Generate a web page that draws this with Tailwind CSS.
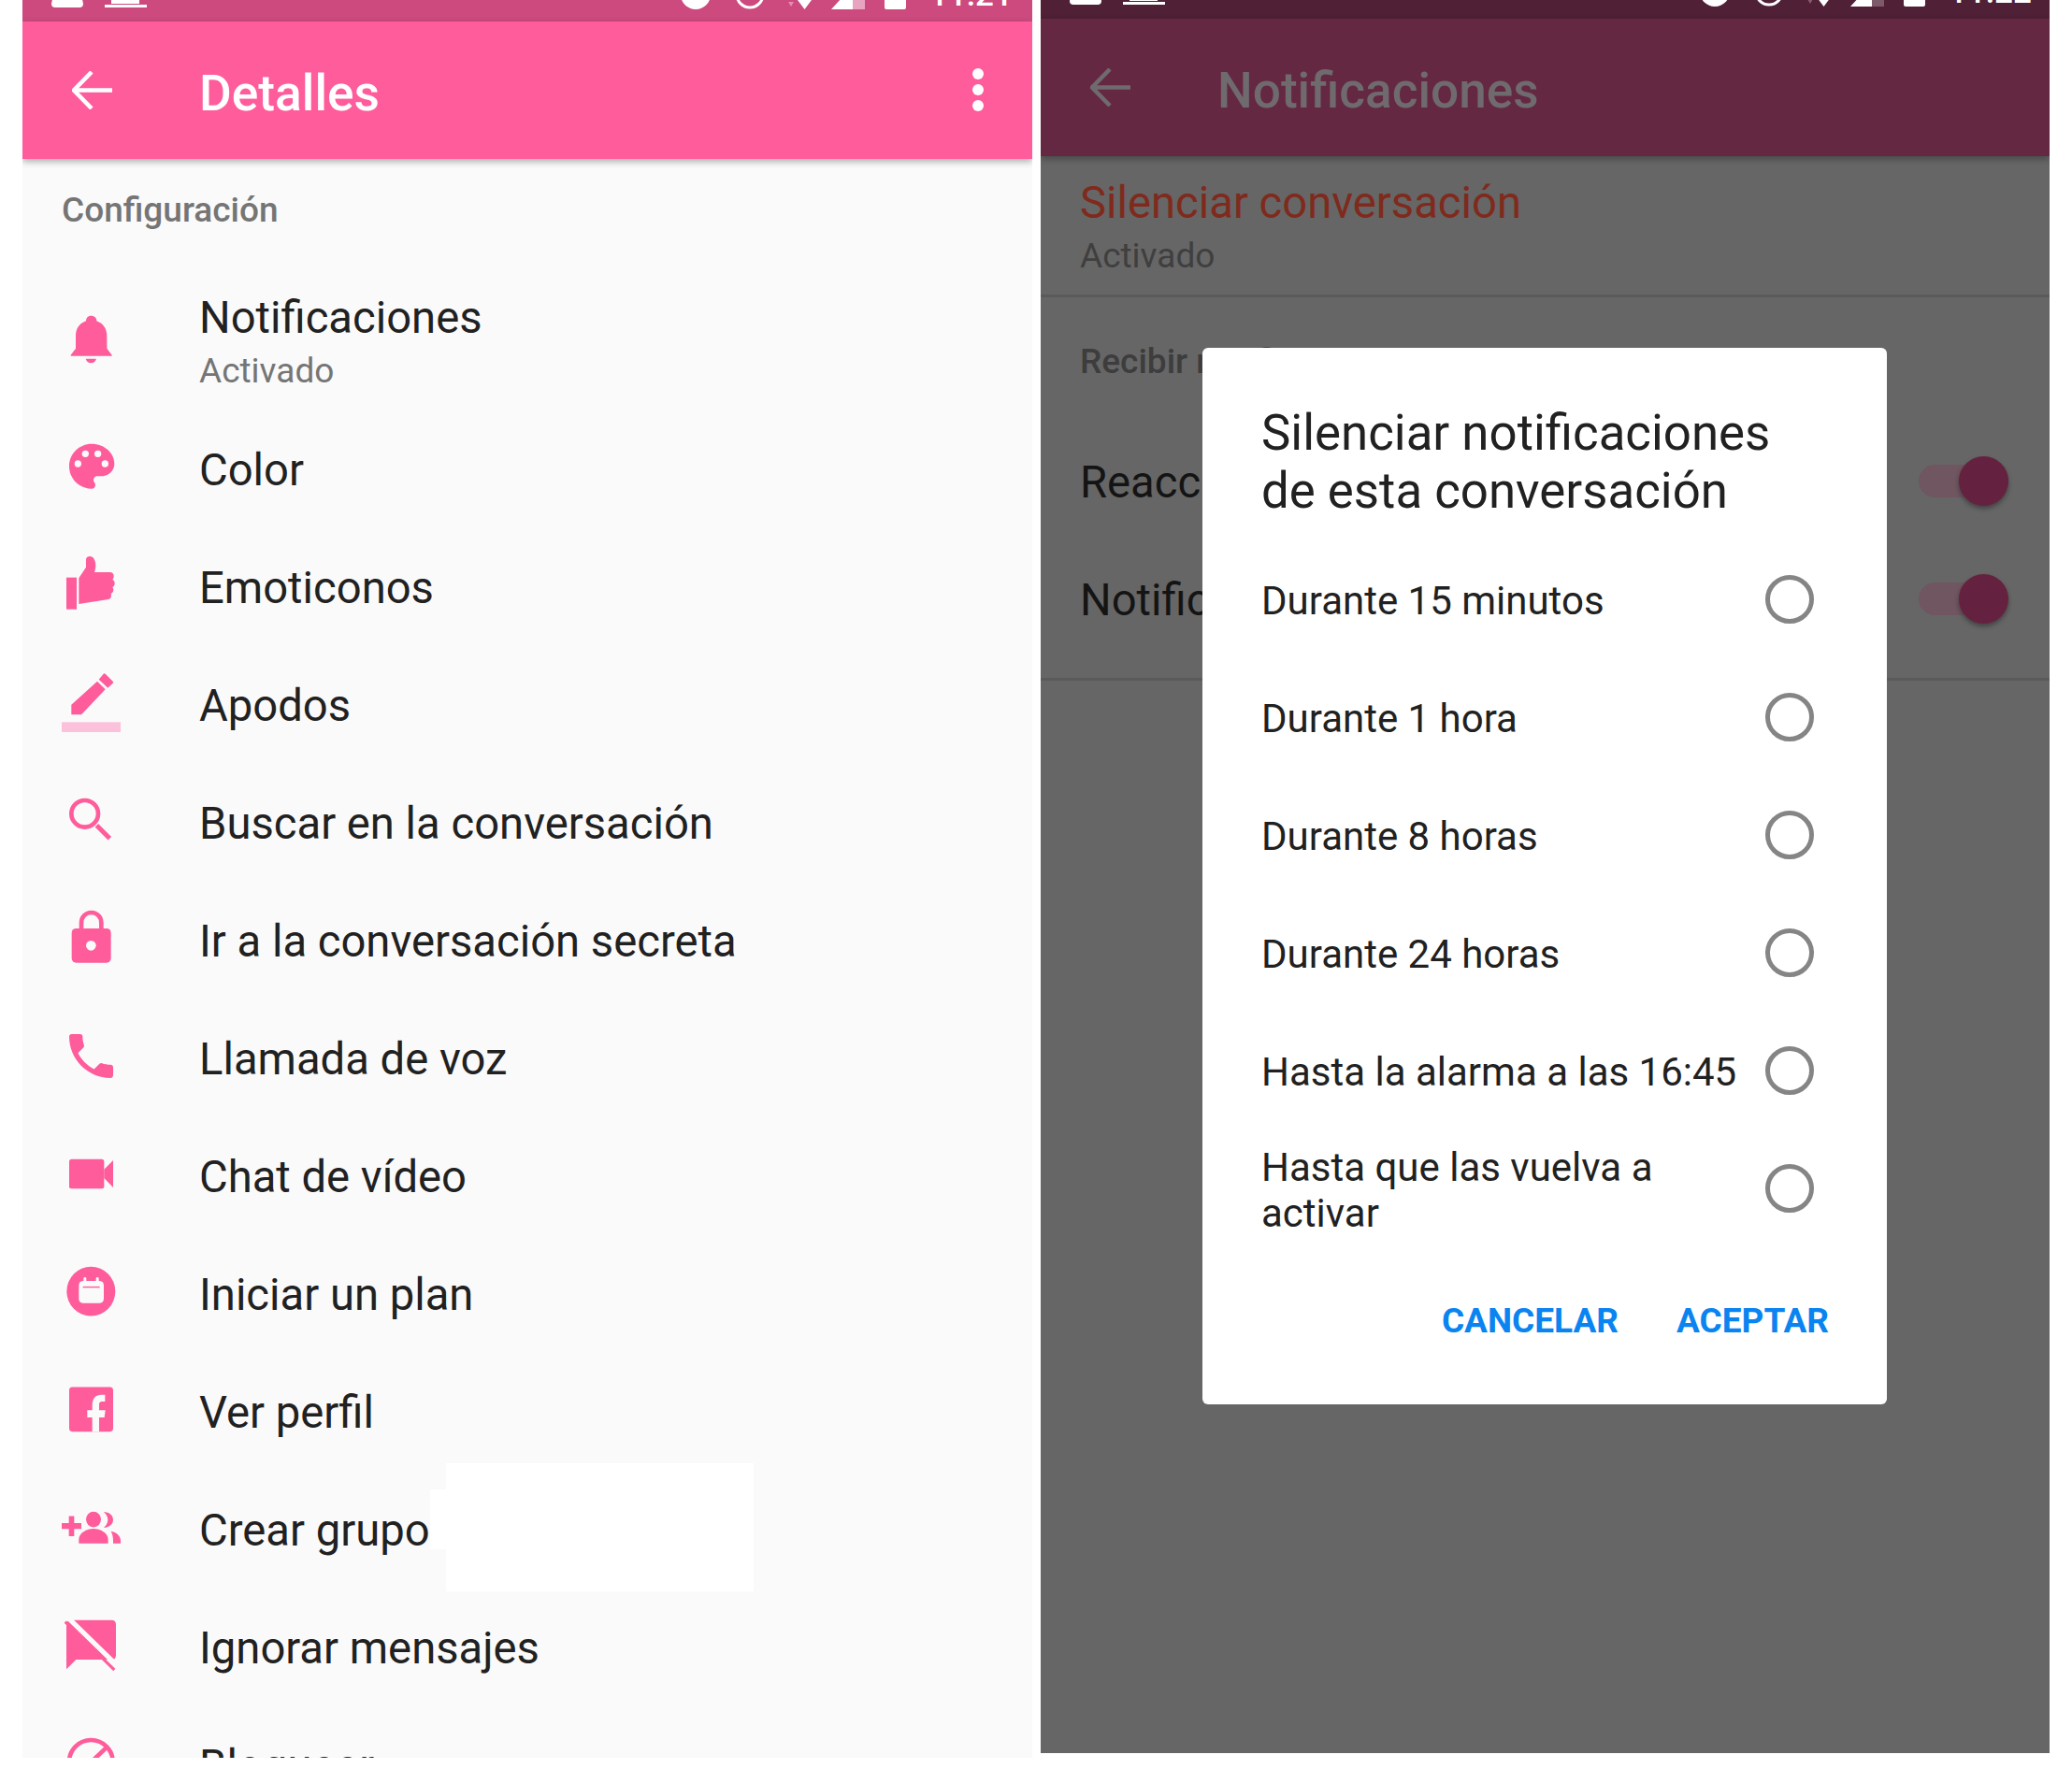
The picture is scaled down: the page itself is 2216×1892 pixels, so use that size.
<!DOCTYPE html>
<html lang="es">
  <head>
    <meta charset="UTF-8" />
    <meta name="viewport" content="width=device-width, initial-scale=1.0" />
    <title>Detalles</title>
    <script src="https://cdn.jsdelivr.net/npm/@tailwindcss/browser@4"></script>
  </head>
  <body class="bg-white w-[2216px] h-[1892px] overflow-hidden font-['Roboto',sans-serif]">
    <div class="flex items-start pl-[24px] gap-[9px]">
      <!-- Left phone: Detalles -->
      <div class="relative w-[1080px] h-[1880px] bg-[#fafafa] overflow-hidden flex flex-col">
        <div class="h-[23px] shrink-0 bg-[#cc4a7e] flex overflow-hidden">
          <svg class="ml-[31px] shrink-0" width="110" height="23" viewBox="0 0 110 23" fill="#fff">
            <path d="M3 -10h28l3 14q0 4-4 4H4q-4 0-4-4z" />
            <rect x="64" y="0" width="30" height="4" />
            <rect x="57" y="5" width="45" height="3" />
          </svg>
          <svg class="ml-[563px] shrink-0" width="245" height="23" viewBox="0 0 245 23" fill="#fff">
            <circle cx="16" cy="-6" r="16" />
            <circle cx="74" cy="-6" r="14" fill="none" stroke="#fff" stroke-width="3" />
            <path d="M115 2h6l-3 5z" fill="#e98ab0" />
            <path d="M125 0h15l-7.500 10z" />
            <path d="M161 10l23-25v25z" />
            <path d="M184 -15l13-10v35h-13z" fill="#e8a3c0" />
            <rect x="218" y="-10" width="23" height="20" rx="2" />
          </svg>
          <span class="ml-[21px] -mt-[25px] text-[35px] leading-[40px] text-white font-medium">11:21</span>
        </div>
        <div class="relative z-10 h-[147px] shrink-0 bg-[#ff5c9c] shadow-[0_3px_7px_rgba(0,0,0,0.3)] flex items-center">
          <svg class="ml-[53px] shrink-0" width="43" height="41" viewBox="0 0 43 41" fill="none" stroke="#fff" stroke-width="4.500">
            <path d="M43 20.500H3M21 1L2 20.500 21 40" />
          </svg>
          <span class="ml-[93px] mt-[8px] text-[53.300px] leading-none font-medium text-white">Detalles</span>
          <div class="ml-auto mr-[52px] -mt-[2px] flex flex-col gap-[5px]">
            <div class="w-[12px] h-[12px] rounded-full bg-white"></div>
            <div class="w-[12px] h-[12px] rounded-full bg-white"></div>
            <div class="w-[12px] h-[12px] rounded-full bg-white"></div>
          </div>
        </div>

        <div class="h-[106px] shrink-0 flex items-center pl-[42px] pt-[3px] text-[37px] font-medium text-[#757575]">Configuración</div>

        <!-- Notificaciones -->
        <div class="h-[163px] shrink-0 flex items-center pl-[16px]">
          <svg class="shrink-0 mt-[11px]" width="120" height="120" viewBox="0 -20 360 360" fill="#ff5c9c">
            <path d="M172 84c-10 0-16 7-16 17-22 8-33 25-33 48v40l-16 21v3h132v-3l-16-21v-40c0-23-11-40-33-48 0-10-6-17-18-17z" />
            <path d="M155 222h34c-3 9-9 14-17 14s-14-5-17-14z" />
          </svg>
          <div class="ml-[53px] pt-[20px]">
            <div class="text-[47.200px] leading-[57px] pt-[1px] text-[#212121]">Notificaciones</div>
            <div class="text-[37px] leading-[56px] text-[#757575]">Activado</div>
          </div>
        </div>

        <div class="h-[126px] shrink-0 flex items-center pl-[16px]">
          <svg class="shrink-0" width="120" height="120" viewBox="0 396 360 360" fill="#ff5c9c">
            <path d="M174 494c-40 0-72 32-72 72s32 72 72 72c7 0 12-5 12-12 0-3-1-6-3-8-2-2-3-5-3-8 0-7 5-12 12-12h14c22 0 41-18 41-40 0-35-32-64-73-64z" />
            <circle cx="130" cy="558" r="11" fill="#fafafa" />
            <circle cx="154" cy="526" r="11" fill="#fafafa" />
            <circle cx="194" cy="526" r="11" fill="#fafafa" />
            <circle cx="217" cy="558" r="11" fill="#fafafa" />
          </svg>
          <span class="ml-[53px] pt-[2px] text-[47.200px] text-[#212121]">Color</span>
        </div>

        <div class="h-[126px] shrink-0 flex items-center pl-[16px]">
          <svg class="shrink-0" width="120" height="120" viewBox="0 774 360 360" fill="#ff5c9c">
            <rect x="93" y="923" width="33" height="102" />
            <path d="M133 1008V925l23-35v-24c0-8 6-11 13-11 10 0 18 12 18 30 0 8-2 15-4 21h50c8 0 12 6 12 12 0 6-2 10-4 12 6 3 7 8 7 12 0 6-3 10-7 12 2 3 3 6 3 9 0 6-4 10-8 12 1 2 1 4 1 6 0 8-6 13-14 13z" />
          </svg>
          <span class="ml-[53px] pt-[2px] text-[47.200px] text-[#212121]">Emoticonos</span>
        </div>

        <div class="h-[126px] shrink-0 flex items-center pl-[16px]">
          <svg class="shrink-0" width="120" height="120" viewBox="0 1152 360 360" fill="#ff5c9c">
            <path d="M109 1363v-32l83-75 26 26-77 81z" />
            <path d="M197 1250l15-18q3-3 6 0l24 24q3 3 0 6l-16 15z" />
            <rect x="78" y="1387" width="189" height="32" fill="#fcc1db" />
          </svg>
          <span class="ml-[53px] pt-[2px] text-[47.200px] text-[#212121]">Apodos</span>
        </div>

        <div class="h-[126px] shrink-0 flex items-center pl-[16px]">
          <svg class="shrink-0" width="120" height="120" viewBox="0 -30 360 360" fill="none" stroke="#ff5c9c">
            <circle cx="152" cy="121" r="43" stroke-width="14" />
            <path d="M190 158l42 42" stroke-width="15" />
          </svg>
          <span class="ml-[53px] pt-[2px] text-[47.200px] text-[#212121]">Buscar en la conversación</span>
        </div>

        <div class="h-[126px] shrink-0 flex items-center pl-[16px]">
          <svg class="shrink-0" width="120" height="120" viewBox="0 348 360 360" fill="#ff5c9c">
            <path d="M141 492v-21c0-19 14-33 32-33s32 14 32 33v21" fill="none" stroke="#ff5c9c" stroke-width="14" />
            <rect x="110" y="489" width="126" height="110" rx="14" />
            <circle cx="172" cy="544" r="16" fill="#fafafa" />
          </svg>
          <span class="ml-[53px] pt-[2px] text-[47.200px] text-[#212121]">Ir a la conversación secreta</span>
        </div>

        <div class="h-[126px] shrink-0 flex items-center pl-[16px]">
          <svg class="shrink-0" width="120" height="120" viewBox="0 726 360 360" fill="#ff5c9c">
            <path transform="translate(78.500 804.500) scale(7.830)" d="M6.620 10.790c1.440 2.830 3.760 5.140 6.590 6.590l2.200-2.200c.27-.27.67-.36 1.020-.24 1.120.37 2.330.57 3.570.57.55 0 1 .45 1 1V20c0 .55-.45 1-1 1-9.390 0-17-7.610-17-17 0-.55.45-1 1-1h3.500c.55 0 1 .45 1 1 0 1.250.2 2.450.57 3.570.11.35.03.74-.25 1.020l-2.200 2.200z" />
          </svg>
          <span class="ml-[53px] pt-[2px] text-[47.200px] text-[#212121]">Llamada de voz</span>
        </div>

        <div class="h-[126px] shrink-0 flex items-center pl-[16px]">
          <svg class="shrink-0" width="120" height="120" viewBox="0 1104 360 360" fill="#ff5c9c">
            <rect x="102" y="1229" width="112" height="95" rx="8" />
            <path d="M214 1262l29-29v87l-29-30z" />
          </svg>
          <span class="ml-[53px] pt-[2px] text-[47.200px] text-[#212121]">Chat de vídeo</span>
        </div>

        <div class="h-[126px] shrink-0 flex items-center pl-[16px]">
          <svg class="shrink-0" width="120" height="120" viewBox="0 -48 360 360" fill="#ff5c9c">
            <g transform="scale(1 1.056)">
              <ellipse cx="172" cy="117" rx="78" ry="75" />
              <rect x="133" y="85" width="80" height="68" rx="14" fill="#fafafa" />
              <rect x="148" y="74" width="9" height="14" rx="4" fill="#fafafa" />
              <rect x="188" y="74" width="9" height="14" rx="4" fill="#fafafa" />
              <rect x="146" y="102" width="54" height="4" />
            </g>
          </svg>
          <span class="ml-[53px] pt-[2px] text-[47.200px] text-[#212121]">Iniciar un plan</span>
        </div>

        <div class="h-[126px] shrink-0 flex items-center pl-[16px]">
          <svg class="shrink-0" width="120" height="120" viewBox="0 330 360 360" fill="#ff5c9c">
            <g transform="scale(1 1.056)">
              <rect x="102" y="408" width="141" height="135" rx="10" />
              <path d="M176 543v-43h-16v-22h16v-16c0-20 12-31 29-31h12v21h-10c-7 0-9 4-9 10v16h20l-3 22h-17v43z" fill="#fafafa" />
            </g>
          </svg>
          <span class="ml-[53px] pt-[2px] text-[47.200px] text-[#212121]">Ver perfil</span>
        </div>

        <div class="h-[126px] shrink-0 flex items-center pl-[16px]">
          <svg class="shrink-0" width="120" height="120" viewBox="0 708 360 360" fill="#ff5c9c">
            <g transform="scale(1 1.056)">
              <path d="M78 821h23v-21h17v21h23v18h-23v22h-17v-22H78z" />
              <ellipse cx="180" cy="810" rx="24" ry="24" />
              <path d="M133 883v-12c0-20 25-33 47-33s47 13 47 33v12z" />
              <path d="M213 787c16 0 30 10 30 24s-14 24-30 24c8-7 13-15 13-24s-5-17-13-24z" />
              <path d="M236 846c18 3 31 15 31 27v10h-24v-10c0-10-3-20-7-27z" />
            </g>
          </svg>
          <span class="ml-[53px] pt-[2px] text-[47.200px] text-[#212121]">Crear grupo</span>
        </div>

        <div class="h-[126px] shrink-0 flex items-center pl-[16px]">
          <svg class="shrink-0" width="120" height="120" viewBox="0 1086 360 360" fill="#ff5c9c">
            <g transform="scale(1 1.056)">
              <path d="M107 1116h131q14 0 14 14v92q0 14-14 14H124l-31 29v-135q0-14 14-14z" />
              <path d="M100 1110l158 146" stroke="#fafafa" stroke-width="15" />
              <path d="M89 1121l158 146" stroke="#ff5c9c" stroke-width="9" />
            </g>
          </svg>
          <span class="ml-[53px] pt-[2px] text-[47.200px] text-[#212121]">Ignorar mensajes</span>
        </div>

        <div class="h-[126px] shrink-0 flex items-center pl-[16px]">
          <svg class="shrink-0" width="120" height="120" viewBox="0 1464 360 360" fill="none" stroke="#ff5c9c" stroke-width="14">
            <circle cx="172" cy="1633" r="70" />
            <path d="M150 1655l76-72" />
          </svg>
          <span class="ml-[53px] pt-[2px] text-[47.200px] text-[#212121]">Bloquear</span>
        </div>

        <!-- White patches over the row text -->
        <div class="absolute left-[453px] top-[1565px] w-[329px] h-[137px] bg-white"></div>
        <div class="absolute left-[436px] top-[1593px] w-[17px] h-[64px] bg-white"></div>
      </div>

      <!-- Right phone: Notificaciones with dialog -->
      <div class="relative w-[1079px] h-[1875px] bg-[#666666] overflow-hidden flex flex-col">
        <div class="h-[20px] shrink-0 bg-[#4f2036] flex overflow-hidden">
          <svg class="ml-[31px] shrink-0" width="110" height="20" viewBox="0 0 110 20" fill="#fff">
            <path d="M3 -13h28l3 14q0 4-4 4H4q-4 0-4-4z" />
            <rect x="64" y="-3" width="30" height="4" />
            <rect x="57" y="2" width="45" height="3" />
          </svg>
          <svg class="ml-[564px] shrink-0" width="245" height="20" viewBox="0 0 245 20" fill="#fff">
            <circle cx="16" cy="-9" r="16" />
            <circle cx="74" cy="-9" r="14" fill="none" stroke="#fff" stroke-width="3" />
            <path d="M115 -1h6l-3 5z" fill="#8a5a70" />
            <path d="M125 -3h15l-7.500 10z" />
            <path d="M161 7l23-25v25z" />
            <path d="M184 -18l13-10v35h-13z" fill="#7d5a6a" />
            <rect x="218" y="-13" width="23" height="20" rx="2" />
          </svg>
          <span class="ml-[21px] -mt-[28px] text-[35px] leading-[40px] text-white font-medium">11:22</span>
        </div>
        <div class="relative z-10 h-[147px] shrink-0 bg-[#652842] shadow-[0_3px_7px_rgba(0,0,0,0.3)] flex items-center">
          <svg class="ml-[53px] shrink-0" width="43" height="41" viewBox="0 0 43 41" fill="none" stroke="#6f6a6e" stroke-width="4.500">
            <path d="M43 20.500H3M21 1L2 20.500 21 40" />
          </svg>
          <span class="ml-[93px] mt-[8px] text-[53.200px] leading-none font-medium text-[#6f6a6e]">Notificaciones</span>
        </div>

        <div class="h-[148px] shrink-0 pl-[42px] pt-[22px]">
          <div class="text-[47.200px] leading-[56px] text-[#7f2a1c]">Silenciar conversación</div>
          <div class="text-[37px] leading-[58px] text-[#3f3f3f]">Activado</div>
        </div>
        <div class="h-[3px] shrink-0 bg-[#5a5a5a]"></div>

        <div class="h-[133px] shrink-0 pl-[42px] pt-[45px] text-[37px] leading-[48px] font-medium text-[#3d3d3d]">Recibir notificaciones</div>
        <div class="h-[126px] shrink-0 flex items-center pl-[42px] pr-[44px] text-[47.200px] text-[#141414]">
          <span class="pt-[5px]">Reacciones</span>
          <div class="relative ml-auto w-[96px] h-[35px] rounded-full bg-[#6f5660]">
            <div class="absolute -top-[9px] right-0 w-[53px] h-[53px] rounded-full bg-[#652240] shadow-[0_3px_5px_rgba(0,0,0,0.35)]"></div>
          </div>
        </div>
        <div class="h-[126px] shrink-0 flex items-center pl-[42px] pr-[44px] text-[47.200px] text-[#141414]">
          <span class="pt-[5px]">Notificaciones</span>
          <div class="relative ml-auto w-[96px] h-[35px] rounded-full bg-[#6f5660]">
            <div class="absolute -top-[9px] right-0 w-[53px] h-[53px] rounded-full bg-[#652240] shadow-[0_3px_5px_rgba(0,0,0,0.35)]"></div>
          </div>
        </div>
        <div class="h-[3px] mt-[22px] shrink-0 bg-[#5a5a5a]"></div>

        <!-- Dialog -->
        <div class="absolute z-20 left-[173px] top-[372px] w-[732px] h-[1130px] bg-white rounded-[6px] pt-[60px] flex flex-col">
          <div class="pl-[63px] text-[52.800px] leading-[62px] text-[#212121]">Silenciar notificaciones<br />de esta conversación</div>
          <div class="mt-[22px] flex flex-col text-[42px] text-[#212121]">
            <div class="h-[126px] flex items-center pl-[63px] pr-[78px]">
              <span class="flex-1 pt-[2px]">Durante 15 minutos</span>
              <div class="shrink-0 w-[52px] h-[52px] rounded-full border-[5px] border-[#858585]"></div>
            </div>
            <div class="h-[126px] flex items-center pl-[63px] pr-[78px]">
              <span class="flex-1 pt-[2px]">Durante 1 hora</span>
              <div class="shrink-0 w-[52px] h-[52px] rounded-full border-[5px] border-[#858585]"></div>
            </div>
            <div class="h-[126px] flex items-center pl-[63px] pr-[78px]">
              <span class="flex-1 pt-[2px]">Durante 8 horas</span>
              <div class="shrink-0 w-[52px] h-[52px] rounded-full border-[5px] border-[#858585]"></div>
            </div>
            <div class="h-[126px] flex items-center pl-[63px] pr-[78px]">
              <span class="flex-1 pt-[2px]">Durante 24 horas</span>
              <div class="shrink-0 w-[52px] h-[52px] rounded-full border-[5px] border-[#858585]"></div>
            </div>
            <div class="h-[126px] flex items-center pl-[63px] pr-[78px]">
              <span class="flex-1 pt-[2px]">Hasta la alarma a las 16:45</span>
              <div class="shrink-0 w-[52px] h-[52px] rounded-full border-[5px] border-[#858585]"></div>
            </div>
            <div class="h-[126px] flex items-center pl-[63px] pr-[78px]">
              <span class="flex-1 pt-[3px] leading-[49px]">Hasta que las vuelva a activar</span>
              <div class="shrink-0 w-[52px] h-[52px] rounded-full border-[5px] border-[#858585]"></div>
            </div>
          </div>
          <div class="mt-[55px] flex justify-end gap-[62px] pr-[62px] text-[37px] leading-[48px] font-bold text-[#0a84f0]">
            <span>CANCELAR</span>
            <span>ACEPTAR</span>
          </div>
        </div>
      </div>
    </div>
  </body>
</html>
